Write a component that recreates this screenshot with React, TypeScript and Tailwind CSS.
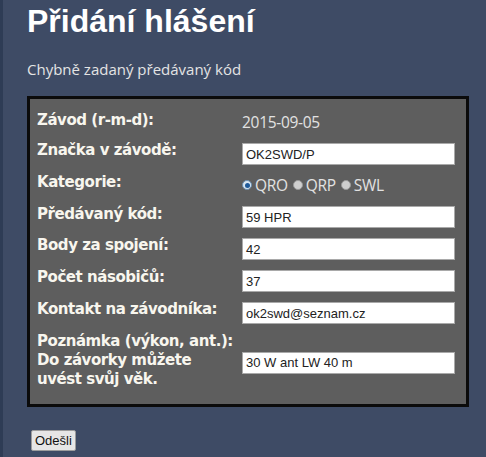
import React from "react";

const Input = ({ value }: { value: string }) => (
  <div className="w-[213px] h-[22px] bg-white border border-[#a9a9a9] pl-[3px] flex items-center text-[13px] text-[#222] leading-none" style={{ fontFamily: '"Liberation Sans", Arial, sans-serif' }}>
    {value}
  </div>
);

const Radio = ({ checked, label }: { checked?: boolean; label: string }) => (
  <div className="flex items-center gap-[3px] mr-[5px]">
    {checked ? (
      <div className="w-[10px] h-[10px] rounded-full bg-[#d8e6f2] border border-[#6b8fb0] flex items-center justify-center">
        <div className="w-[5px] h-[5px] rounded-full bg-[#1e5a9a]" />
      </div>
    ) : (
      <div className="w-[10px] h-[10px] rounded-full bg-[#cfcfcf] border border-[#9a9a9a]" />
    )}
    <span>{label}</span>
  </div>
);

const labelCls = "w-[205px] shrink-0 whitespace-nowrap text-[15px] font-bold leading-[18px] tracking-[-0.45px] text-[#f8f6ee]";

export default function App() {
  const sans = { fontFamily: '"Open Sans", "Noto Sans", sans-serif' };
  return (
    <div className="w-[486px] h-[457px] bg-[#3e4b65] flex overflow-hidden">
      <div className="w-[3px] h-full bg-[#2e3c55] shrink-0" />
      <div className="pl-[24px] flex flex-col">
        <h1 className="text-[32px] font-bold text-white leading-none mt-[5px]" style={{ fontFamily: '"Liberation Sans", Arial, sans-serif' }}>
          Přidání hlášení
        </h1>
        <p className="text-[15px] text-[#e4e4e4] mt-[22px] leading-[20px]" style={sans}>
          Chybně zadaný předávaný kód
        </p>
        <div className="mt-[17px] w-[442px] h-[311px] border-[3px] border-[#0b0b0b] bg-[#5e5e5e] pl-[7px] pt-[12px]" style={{ fontFamily: '"DejaVu Sans", Verdana, sans-serif' }}>
          <div className="flex h-[30px] items-start">
            <div className={labelCls}>Závod (r-m-d):</div>
            <div className="text-[15.5px] text-[#e2e2e2] leading-[18px] mt-[2px] tracking-[-0.3px]" style={sans}>2015-09-05</div>
          </div>
          <div className="flex h-[32px] items-start">
            <div className={labelCls}>Značka v závodě:</div>
            <div className="mt-[2px]"><Input value="OK2SWD/P" /></div>
          </div>
          <div className="flex h-[32px] items-start">
            <div className={labelCls}>Kategorie:</div>
            <div className="flex items-center text-[15.5px] text-[#e2e2e2] leading-[18px] mt-[3px] tracking-[-0.3px]" style={sans}>
              <Radio checked label="QRO" />
              <Radio label="QRP" />
              <Radio label="SWL" />
            </div>
          </div>
          <div className="flex h-[31px] items-start">
            <div className={labelCls}>Předávaný kód:</div>
            <div className="mt-[1px]"><Input value="59 HPR" /></div>
          </div>
          <div className="flex h-[32px] items-start">
            <div className={labelCls}>Body za spojení:</div>
            <div className="mt-[2px]"><Input value="42" /></div>
          </div>
          <div className="flex h-[32px] items-start">
            <div className={labelCls}>Počet násobičů:</div>
            <div className="mt-[2px]"><Input value="37" /></div>
          </div>
          <div className="flex h-[32px] items-start">
            <div className={labelCls}>Kontakt na závodníka:</div>
            <div className="mt-[2px]"><Input value="ok2swd@seznam.cz" /></div>
          </div>
          <div className="flex items-center">
            <div className={labelCls + " leading-[19px]"}>
              Poznámka (výkon, ant.):<br />Do závorky můžete<br />uvést svůj věk.
            </div>
            <div className="mt-[4px]"><Input value="30 W ant LW 40 m" /></div>
          </div>
        </div>
        <div className="mt-[20px] ml-[4px]">
          <button className="h-[21px] px-[3px] text-[13px] text-[#111] bg-[#e6e6e6] border border-[#9c9c9c] rounded-[2px] leading-none" style={{ fontFamily: '"Liberation Sans", Arial, sans-serif' }}>
            Odešli
          </button>
        </div>
      </div>
    </div>
  );
}
